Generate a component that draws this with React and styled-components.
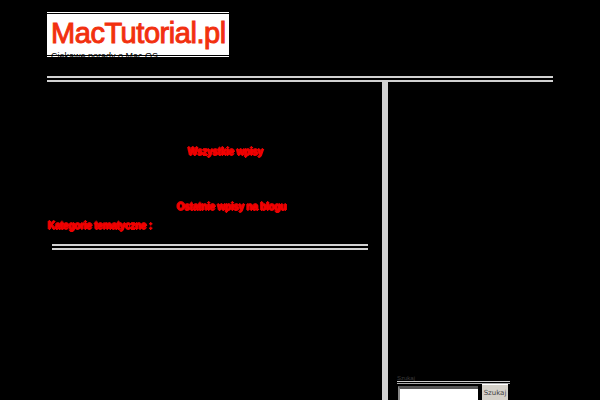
import styled, { createGlobalStyle } from "styled-components";

const GlobalStyle = createGlobalStyle`
  html, body {
    margin: 0;
    height: 100%;
    overflow: hidden;
    background: #000;
    font-family: "Liberation Sans", Arial, sans-serif;
  }
`;

const Page = styled.div`
  width: 506px;
  height: 400px;
  margin-left: 47px;
  padding-top: 12px;
  box-sizing: border-box;
  display: flex;
  flex-direction: column;
`;

const Header = styled.header`
  height: 64px;
`;

const LogoFrame = styled.div`
  width: 182px;
  height: 45px;
  box-sizing: border-box;
  border-top: 1px solid #fff;
  border-bottom: 1px solid #fff;
  padding: 1px 0;
  background: #000;
`;

const Logo = styled.a`
  display: block;
  height: 41px;
  background: #fff;
  color: #f2300f;
  font-size: 29px;
  line-height: 38px;
  letter-spacing: -0.45px;
  padding-left: 4px;
  -webkit-text-stroke: 1px #f2300f;
  white-space: nowrap;
`;

const Tagline = styled.p`
  margin: -6px 0 0 4px;
  font-size: 9px;
  line-height: 11px;
  color: #000;
  white-space: nowrap;
  position: relative;
`;

const DoubleRule = styled.hr`
  margin: ${(p) => p.$margin || 0};
  height: 2px;
  border: 0;
  border-top: 2px solid #d2d2d2;
  border-bottom: 2px solid #d2d2d2;
  background: #000;
  flex: none;
`;

const Columns = styled.div`
  flex: 1;
  display: flex;
  min-height: 0;
`;

const Main = styled.main`
  width: 335px;
  padding-top: 64px;
  box-sizing: border-box;
`;

const Heading = styled.p`
  margin: 0;
  color: #f00000;
  font-size: 10px;
  font-weight: bold;
  letter-spacing: -0.25px;
  line-height: 11px;
  white-space: nowrap;
  filter: blur(0.6px);
  text-shadow: 0 1px 0 #f00000, 0 -1px 0 #d00000, 1px 0 0 #f00000, -1px 0 0 #d00000;
  padding-left: ${(p) => p.$indent || 0}px;
  margin-top: ${(p) => p.$top || 0}px;
`;

const Sidebar = styled.aside`
  flex: 1;
  border-left: 6px solid #d2d2d2;
  padding: 293px 0 0 9px;
  min-width: 0;
`;

const WidgetTitle = styled.div`
  width: 113px;
  font-size: 6px;
  line-height: 6px;
  color: #3a3a3a;
  border-bottom: 1px solid #ccc;
`;

const WidgetRule = styled.div`
  width: 113px;
  height: 1px;
  margin-top: 1px;
  background: #aaa;
`;

const SearchForm = styled.form`
  display: flex;
  align-items: flex-start;
  width: 113px;
`;

const SearchInput = styled.input`
  width: 80px;
  height: 18px;
  margin: 2px 0 0 1px;
  padding: 0;
  box-sizing: border-box;
  border: 0;
  border-top: 3px solid #555;
  border-left: 2px solid #888;
  background: #fff;
`;

const SearchButton = styled.button`
  width: 26px;
  height: 22px;
  margin-left: 4px;
  padding: 0 0 6px;
  border: 0;
  border-top: 1px solid #fff;
  background: #d4d0c8;
  color: #444;
  font-family: "DejaVu Sans", sans-serif;
  font-size: 7px;
  line-height: 14px;
  text-align: center;
`;

export default function App() {
  return (
    <>
      <GlobalStyle />
      <Page>
        <Header>
          <LogoFrame>
            <Logo>MacTutorial.pl</Logo>
          </LogoFrame>
          <Tagline>Ciekawe porady o Mac OS</Tagline>
        </Header>
        <DoubleRule />
        <Columns>
          <Main>
            <Heading $indent={141}>Wszystkie wpisy</Heading>
            <Heading $indent={130} $top={44}>Ostatnie wpisy na blogu</Heading>
            <Heading $indent={1} $top={8}>Kategorie tematyczne :</Heading>
            <DoubleRule $margin="13px 14px 0 5px" />
          </Main>
          <Sidebar>
            <WidgetTitle>Szukaj</WidgetTitle>
            <WidgetRule />
            <SearchForm>
              <SearchInput />
              <SearchButton type="button">Szukaj</SearchButton>
            </SearchForm>
          </Sidebar>
        </Columns>
      </Page>
    </>
  );
}
